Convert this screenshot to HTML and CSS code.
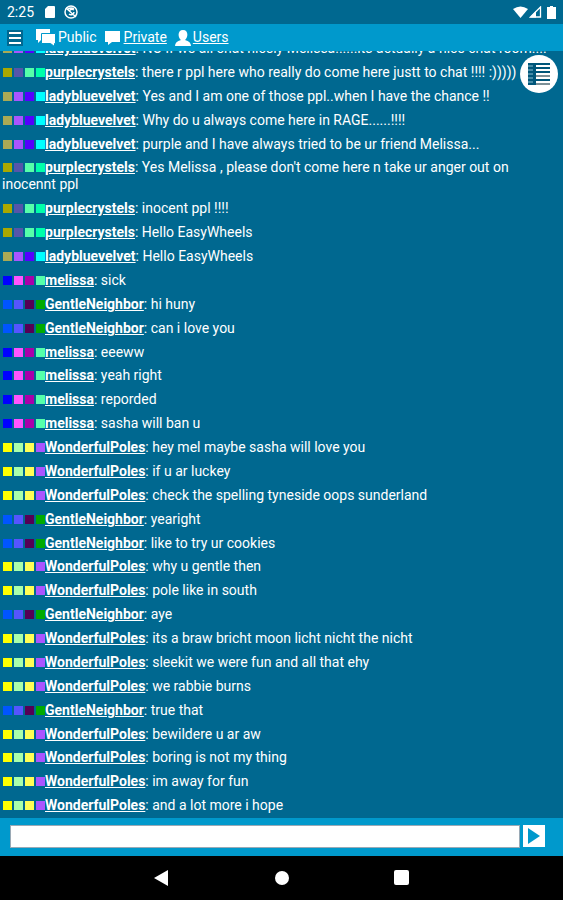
FILE: index.html
```
<!DOCTYPE html>
<html lang="en">
<head>
  <meta charset="UTF-8">
  <meta name="viewport" content="width=device-width, initial-scale=1.0">
  <title>Public chat</title>
  <link rel="stylesheet" href="styles.css">
</head>
<body>
  <header class="statusbar">
    <span class="time">2:25</span>
    <svg class="sd" width="12" height="14" viewBox="0 0 12 14"><path d="M4 1h6q1 0 1 1v10q0 1-1 1H2q-1 0-1-1V4z" fill="#fff"/></svg>
    <svg width="14" height="14" viewBox="0 0 14 14" fill="none" stroke="#fff" stroke-width="1.5"><circle cx="7" cy="7" r="6"/><path d="M2 3l10 9M5 7a3 3 0 0 1 5-2M10 7a3 3 0 0 1-5 2M4 4q3-2 6 0"/></svg>
    <span class="signals">
      <svg width="15" height="12" viewBox="0 0 15 12"><path d="M0 3Q7.500-2 15 3L7.500 12z" fill="#fff"/></svg>
      <svg width="13" height="12" viewBox="0 0 13 12"><path d="M1.500 11L11.500 1v10z" fill="none" stroke="#fff" stroke-width="1.300"/><path d="M1 11.500L7 5v6.500z" fill="#fff"/></svg>
      <svg class="battery" width="9" height="13" viewBox="0 0 9 13"><path d="M3 0h3v1h3v12H0V1h3z" fill="#fff"/></svg>
    </span>
  </header>

  <nav class="tabs">
    <button class="menu" aria-label="Menu"><svg width="16" height="16" viewBox="0 0 16 16" stroke="#fff" stroke-width="2"><path d="M2 3h12M2 8h12M2 13h12"/></svg></button>
    <span class="tab">
      <svg width="20" height="18" viewBox="0 0 20 18"><path d="M0 0h14v11H5l-3 3v-3H0z" fill="#fff"/><path d="M5.500 4.500h14v10h-1v3l-4-3h-9z" fill="#fff" stroke="#0099cc"/></svg>
      Public
    </span>
    <a class="tab" href="#private">
      <svg width="17" height="16" viewBox="0 0 17 16"><path d="M0 1h15v11H7l-4 3v-3H0z" fill="#fff"/></svg>
      <span>Private</span>
    </a>
    <a class="tab" href="#users">
      <svg width="16" height="18" viewBox="0 0 16 18"><path d="M8 1c6 0 5 8 2 10 4 1 6 3 6 6H0c0-3 2-5 6-6C3 9 2 1 8 1z" fill="#fff"/></svg>
      <span>Users</span>
    </a>
  </nav>

  <main class="chat">
    <ul class="messages" id="messages"></ul>
    <button class="roster" aria-label="Room list">
      <svg width="24" height="22" viewBox="0 0 24 22"><path d="M1 0h8v22H1z" fill="#00567a"/><path d="M1 3h5M1 7h5M1 11h5M1 15h5M1 19h5" stroke="#8fc3d6"/><path d="M9 1h14M9 5h14M9 9h14M9 17h14" stroke="#00567a" stroke-width="2"/><path d="M9 13h14M9 21h14" stroke="#7d9097" stroke-width="2"/></svg>
    </button>
  </main>

  <form class="composer" onsubmit="return false">
    <input type="text" aria-label="Message">
    <button aria-label="Send"><svg width="12" height="16" viewBox="0 0 12 16"><path d="M0 0l12 8-12 8z" fill="#0099cc"/></svg></button>
  </form>

  <footer class="sysnav">
    <button aria-label="Back"><svg width="16" height="16" viewBox="0 0 16 16"><path d="M14 0v16L0 8z" fill="#fff"/></svg></button>
    <button aria-label="Home"><svg width="16" height="16" viewBox="0 0 16 16"><circle cx="8" cy="8" r="7" fill="#fff"/></svg></button>
    <button aria-label="Recent apps"><svg width="16" height="16" viewBox="0 0 16 16"><rect width="15" height="15" rx="2" fill="#fff"/></svg></button>
  </footer>

  <script src="chat.js"></script>
</body>
</html>
```
FILE: styles.css
```
* {
  box-sizing: border-box;
}
body {
  margin: 0;
  height: 100vh;
  display: flex;
  flex-direction: column;
  font-family: Roboto, sans-serif;
  font-size: 14px;
  line-height: 17px;
  color: #fff;
  background: #006890;
}
svg {
  display: block;
  flex: none;
}
button {
  border: 0;
  padding: 0;
  background: none;
  display: flex;
  align-items: center;
  justify-content: center;
  cursor: pointer;
}
a {
  color: #fff;
}

.statusbar {
  flex: none;
  height: 24px;
  padding: 0 7px;
  display: flex;
  align-items: center;
  gap: 8px;
}
.sd {
  margin-left: 2px;
}
.signals {
  margin-left: auto;
  display: flex;
  align-items: center;
  gap: 1px;
}
.battery {
  margin-left: 4px;
}

.tabs {
  flex: none;
  height: 27px;
  padding: 0 7px;
  display: flex;
  align-items: center;
  gap: 8px;
  background: #0099cc;
}
.menu {
  width: 16px;
  height: 16px;
  margin-right: 5px;
  background: #006890;
}
.tab {
  display: flex;
  align-items: center;
  gap: 2px;
  text-decoration: none;
}
.tab span {
  text-decoration: underline;
}

.chat {
  flex: 1;
  min-height: 0;
  position: relative;
  display: flex;
  flex-direction: column;
  justify-content: flex-end;
  overflow: hidden;
}
.messages {
  list-style: none;
  margin: 0;
  padding: 0 2px;
  flex: none;
  height: calc(100% + 14px);
  display: flex;
  flex-direction: column;
}
.messages li {
  flex: 1 0 auto;
  padding-top: 3px;
  padding-right: 8px;
}
.nick {
  font-weight: bold;
}
.swatches {
  display: inline-flex;
  gap: 2px;
  width: 43px;
  padding-left: 1px;
}
.swatches i {
  width: 9px;
  height: 9px;
}
.purplecrystels i:nth-child(1) { background: #aaa800; }
.purplecrystels i:nth-child(2) { background: #5555aa; }
.purplecrystels i:nth-child(3) { background: #55ffaa; }
.purplecrystels i:nth-child(4) { background: #00ffaa; }
.ladybluevelvet i:nth-child(1) { background: #aaaa55; }
.ladybluevelvet i:nth-child(2) { background: #aa55ff; }
.ladybluevelvet i:nth-child(3) { background: #5500ff; }
.ladybluevelvet i:nth-child(4) { background: #00ffff; }
.melissa i:nth-child(1) { background: #0000ff; }
.melissa i:nth-child(2) { background: #ff55ff; }
.melissa i:nth-child(3) { background: #aa00aa; }
.melissa i:nth-child(4) { background: #55ffaa; }
.GentleNeighbor i:nth-child(1) { background: #0055ff; }
.GentleNeighbor i:nth-child(2) { background: #5555ff; }
.GentleNeighbor i:nth-child(3) { background: #550055; }
.GentleNeighbor i:nth-child(4) { background: #00aa00; }
.WonderfulPoles i:nth-child(1) { background: #ffff00; }
.WonderfulPoles i:nth-child(2) { background: #aaffaa; }
.WonderfulPoles i:nth-child(3) { background: #ffff55; }
.WonderfulPoles i:nth-child(4) { background: #aa55ff; }

.roster {
  position: absolute;
  top: 4px;
  right: 5px;
  width: 38px;
  height: 38px;
  border-radius: 50%;
  background: #fff;
}

.composer {
  flex: none;
  height: 38px;
  padding: 0 18px 2px 10px;
  display: flex;
  align-items: center;
  gap: 3px;
  background: #0099cc;
}
.composer input {
  flex: 1;
  min-width: 0;
  height: 23px;
  border: 1px solid #9aa9b5;
  padding: 0 4px;
  font: inherit;
}
.composer button {
  width: 22px;
  height: 22px;
  background: #fff;
}

.sysnav {
  flex: none;
  height: 44px;
  display: flex;
  align-items: center;
  justify-content: center;
  gap: 104px;
  background: #000;
}
```
FILE: chat.js
```
const log = [
  ['ladybluevelvet', 'NO if we all chat nicely Melissa......its actually a nice chat room....'],
  ['purplecrystels', 'there r ppl here who really do come here justt to chat !!!! :)))))'],
  ['ladybluevelvet', 'Yes and I am one of those ppl..when I have the chance !!'],
  ['ladybluevelvet', 'Why do u always come here in RAGE......!!!!'],
  ['ladybluevelvet', 'purple and I have always tried to be ur friend Melissa...'],
  ['purplecrystels', "Yes Melissa , please don't come here n take ur anger out on inocennt ppl"],
  ['purplecrystels', 'inocent ppl !!!!'],
  ['purplecrystels', 'Hello EasyWheels'],
  ['ladybluevelvet', 'Hello EasyWheels'],
  ['melissa', 'sick'],
  ['GentleNeighbor', 'hi huny'],
  ['GentleNeighbor', 'can i love you'],
  ['melissa', 'eeeww'],
  ['melissa', 'yeah right'],
  ['melissa', 'reporded'],
  ['melissa', 'sasha will ban u'],
  ['WonderfulPoles', 'hey mel maybe sasha will love you'],
  ['WonderfulPoles', 'if u ar luckey'],
  ['WonderfulPoles', 'check the spelling tyneside oops sunderland'],
  ['GentleNeighbor', 'yearight'],
  ['GentleNeighbor', 'like to try ur cookies'],
  ['WonderfulPoles', 'why u gentle then'],
  ['WonderfulPoles', 'pole like in south'],
  ['GentleNeighbor', 'aye'],
  ['WonderfulPoles', 'its a braw bricht moon licht nicht the nicht'],
  ['WonderfulPoles', 'sleekit we were fun and all that ehy'],
  ['WonderfulPoles', 'we rabbie burns'],
  ['GentleNeighbor', 'true that'],
  ['WonderfulPoles', 'bewildere u ar aw'],
  ['WonderfulPoles', 'boring is not my thing'],
  ['WonderfulPoles', 'im away for fun'],
  ['WonderfulPoles', 'and a lot more i hope']
];

const list = document.getElementById('messages');
log.forEach(([nick, text]) => {
  const li = document.createElement('li');
  li.innerHTML = `<span class="swatches ${nick}"><i></i><i></i><i></i><i></i></span><a class="nick" href="#${nick}">${nick}</a>: ${text}`;
  list.appendChild(li);
});
```
